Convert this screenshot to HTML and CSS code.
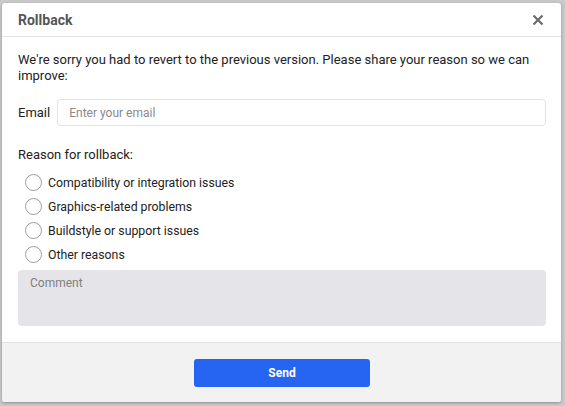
FILE: index.html
```html
<!DOCTYPE html>
<html>
<head>
<meta charset="utf-8">
<link rel="stylesheet" href="styles.css">
</head>
<body>
<div class="dialog">
  <div class="header">
    <div class="title">Rollback</div>
    <button class="close" aria-label="Close">
      <svg width="12" height="12" viewBox="0 0 12 12"><path d="M1.5 1.5 L10.5 10.5 M10.5 1.5 L1.5 10.5" stroke="#6b6b6b" stroke-width="2.2" stroke-linecap="butt"/></svg>
    </button>
  </div>
  <div class="body">
    <p class="intro">We're sorry you had to revert to the previous version. Please share your reason so we can improve:</p>
    <div class="email-row">
      <label class="email-label">Email</label>
      <input class="email-input" type="text" placeholder="Enter your email">
    </div>
    <div class="reason-label">Reason for rollback:</div>
    <div class="radios">
      <label class="radio"><span class="circle"></span>Compatibility or integration issues</label>
      <label class="radio"><span class="circle"></span>Graphics-related problems</label>
      <label class="radio"><span class="circle"></span>Buildstyle or support issues</label>
      <label class="radio"><span class="circle"></span>Other reasons</label>
    </div>
    <textarea class="comment" placeholder="Comment"></textarea>
  </div>
  <div class="footer">
    <button class="send">Send</button>
  </div>
</div>
</body>
</html>
```
FILE: styles.css
```css
html, body {
  margin: 0;
  padding: 0;
}
body {
  width: 565px;
  height: 406px;
  background: #c9c9c9;
  font-family: Roboto, "Liberation Sans", sans-serif;
  overflow: hidden;
}
.dialog {
  margin: 3px 0 0 2px;
  width: 559px;
  height: 399px;
  background: #fff;
  border-radius: 3px;
  box-shadow: 0 1px 3px rgba(0,0,0,0.3);
  display: flex;
  flex-direction: column;
  overflow: hidden;
}
.header {
  height: 33px;
  border-bottom: 1px solid #e2e2e2;
  display: flex;
  align-items: center;
  justify-content: space-between;
  padding: 0 17px 0 16px;
}
.title {
  font-size: 14px;
  font-weight: bold;
  color: #555;
}
.close {
  border: 0;
  background: none;
  padding: 0;
  width: 12px;
  height: 12px;
  display: flex;
}
.body {
  flex: 1;
  padding: 15px 15px 0 16px;
  display: flex;
  flex-direction: column;
}
.intro {
  margin: 0;
  font-size: 13px;
  line-height: 16px;
  color: #222;
}
.email-row {
  display: flex;
  align-items: center;
  gap: 7px;
  margin-top: 15px;
}
.email-label {
  font-size: 13px;
  color: #222;
}
.email-input {
  flex: 1;
  height: 27px;
  box-sizing: border-box;
  border: 1px solid #e3e3e3;
  border-radius: 4px;
  padding: 0 11px;
  font-family: Roboto, "Liberation Sans", sans-serif;
  font-size: 12px;
  outline: none;
}
.email-input::placeholder {
  color: #8a8a8a;
}
.reason-label {
  margin-top: 21px;
  font-size: 13px;
  line-height: 16px;
  color: #222;
}
.radios {
  margin-top: 11px;
  display: flex;
  flex-direction: column;
  gap: 7px;
  padding-left: 8px;
}
.radio {
  display: flex;
  align-items: center;
  gap: 6px;
  font-size: 12.3px;
  line-height: 16px;
  color: #222;
}
.circle {
  width: 15px;
  height: 15px;
  border: 1px solid #9a9a9a;
  border-radius: 50%;
  background: #fff;
  margin-left: -1px;
}
.comment {
  margin-top: 7px;
  height: 56px;
  box-sizing: border-box;
  border: 0;
  border-radius: 4px;
  background: #e5e5e9;
  padding: 6px 12px;
  resize: none;
  font-family: Roboto, "Liberation Sans", sans-serif;
  font-size: 12px;
  outline: none;
}
.comment::placeholder {
  color: #808080;
}
.footer {
  height: 59px;
  border-top: 1px solid #e2e2e2;
  background: #f2f2f2;
  display: flex;
  align-items: center;
  justify-content: center;
}
.send {
  width: 176px;
  height: 28px;
  border: 0;
  border-radius: 3px;
  background: #2565f2;
  color: #fff;
  font-family: Roboto, "Liberation Sans", sans-serif;
  font-size: 12px;
  font-weight: bold;
  margin-left: 1px;
  margin-top: 0;
}
```
